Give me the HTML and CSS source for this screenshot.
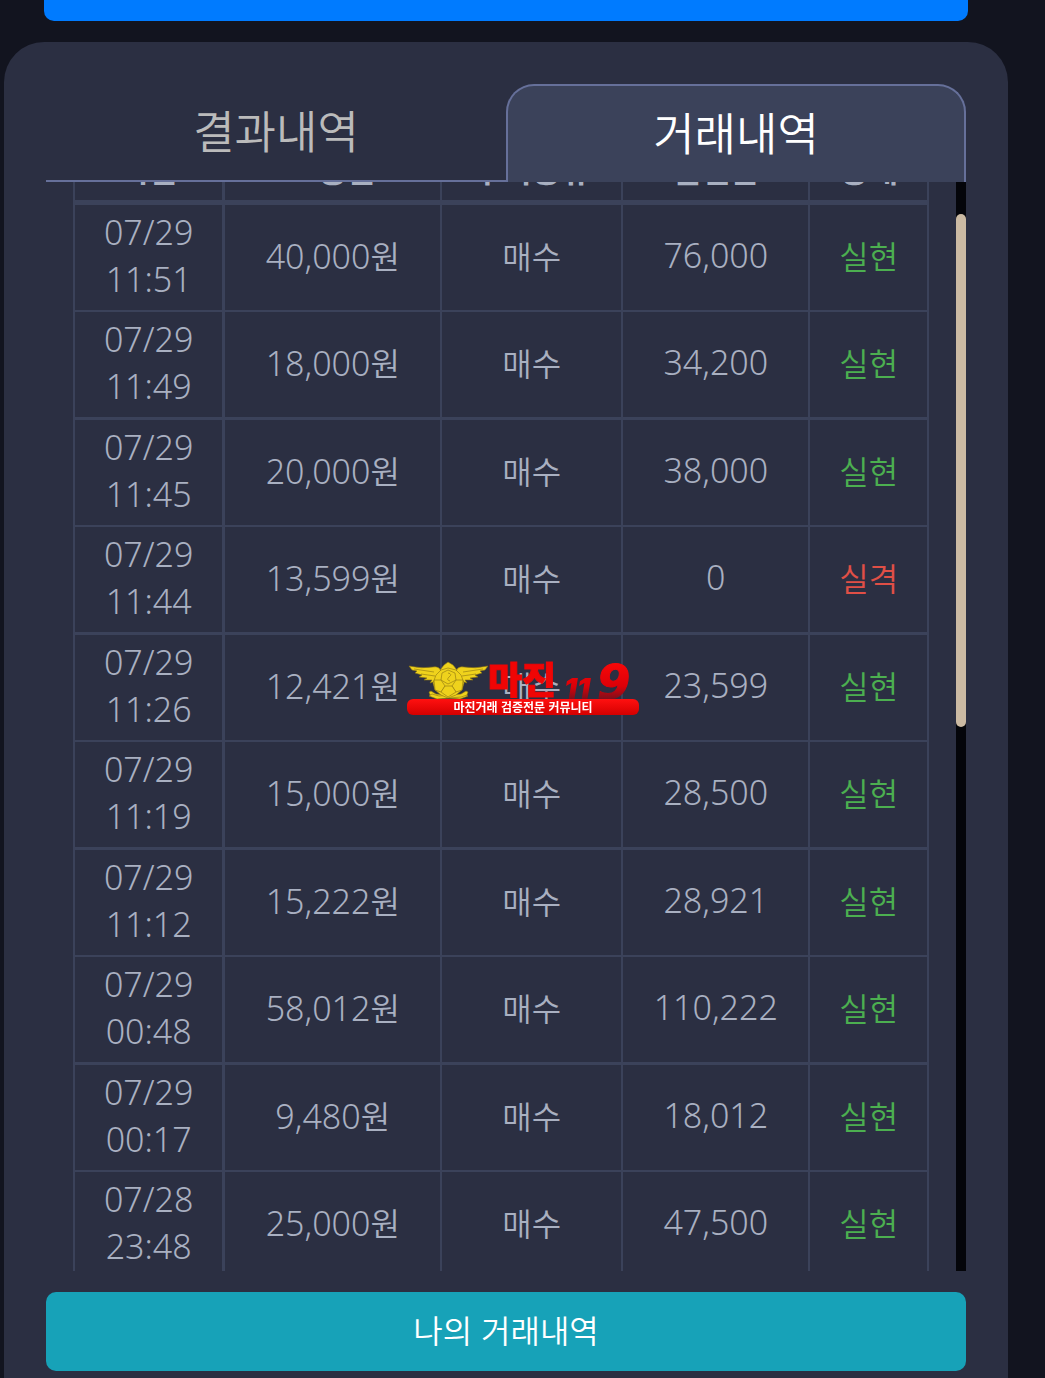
FILE: index.html
```
<!DOCTYPE html>
<html lang="ko">
<head>
    <meta charset="UTF-8">
    <meta name="viewport" content="width=device-width, initial-scale=1.0">
    <title>거래내역</title>
    <link rel="stylesheet" href="styles.css">
</head>
<body>
    <button type="button" class="order" aria-label="주문"></button>
    <main class="panel">
        <nav class="tabs">
            <a href="#result" class="tab">결과내역</a>
            <a href="#trade" class="tab active">거래내역</a>
        </nav>
        <div class="history">
            <div class="list">
                <table>
                    <thead>
                        <tr><th class="time">시간</th><th class="amount">보증금</th><th class="kind">주식종류</th><th class="profit">실현금</th><th>상태</th></tr>
                    </thead>
                    <tbody>
                        <tr><td>07/29<br>11:51</td><td>40,000<span>원</span></td><td><span>매수</span></td><td>76,000</td><td class="win"><span>실현</span></td></tr>
                        <tr><td>07/29<br>11:49</td><td>18,000<span>원</span></td><td><span>매수</span></td><td>34,200</td><td class="win"><span>실현</span></td></tr>
                        <tr><td>07/29<br>11:45</td><td>20,000<span>원</span></td><td><span>매수</span></td><td>38,000</td><td class="win"><span>실현</span></td></tr>
                        <tr><td>07/29<br>11:44</td><td>13,599<span>원</span></td><td><span>매수</span></td><td>0</td><td class="lose"><span>실격</span></td></tr>
                        <tr><td>07/29<br>11:26</td><td>12,421<span>원</span></td><td><span>매수</span></td><td>23,599</td><td class="win"><span>실현</span></td></tr>
                        <tr><td>07/29<br>11:19</td><td>15,000<span>원</span></td><td><span>매수</span></td><td>28,500</td><td class="win"><span>실현</span></td></tr>
                        <tr><td>07/29<br>11:12</td><td>15,222<span>원</span></td><td><span>매수</span></td><td>28,921</td><td class="win"><span>실현</span></td></tr>
                        <tr><td>07/29<br>00:48</td><td>58,012<span>원</span></td><td><span>매수</span></td><td>110,222</td><td class="win"><span>실현</span></td></tr>
                        <tr><td>07/29<br>00:17</td><td>9,480<span>원</span></td><td><span>매수</span></td><td>18,012</td><td class="win"><span>실현</span></td></tr>
                        <tr><td>07/28<br>23:48</td><td>25,000<span>원</span></td><td><span>매수</span></td><td>47,500</td><td class="win"><span>실현</span></td></tr>
                    </tbody>
                </table>
            </div>
            <div class="scrollbar"><div class="thumb"></div></div>
        </div>
        <button type="button" class="mine">나의 거래내역</button>
    </main>

    <svg class="watermark" width="232" height="56" viewBox="0 0 232 56" role="img" aria-label="마진119">
        <defs>
            <linearGradient id="red" x1="0" y1="0" x2="0" y2="1">
                <stop offset="0" stop-color="#ff1010"/>
                <stop offset="1" stop-color="#d40000"/>
            </linearGradient>
            <linearGradient id="fade" x1="0" y1="2" x2="0" y2="38" gradientUnits="userSpaceOnUse">
                <stop offset="0" stop-color="#f80808"/>
                <stop offset=".65" stop-color="#dc0008"/>
                <stop offset="1" stop-color="#7c101c"/>
            </linearGradient>
        </defs>
        <!-- eagle badge -->
        <g fill="#efd21c" stroke="#8c7412" stroke-width=".6" stroke-linejoin="round">
            <path d="M2 5 Q15 8 26 6 Q32 5 34 10 L29 20 L23 22 L25 19 L17 19 L20 17 L12 16 L15 14 L8 12 L10 10 L5 9Z"/>
            <path d="M81 5 Q68 8 57 6 Q51 5 49 10 L54 20 L60 22 L58 19 L66 19 L63 17 L71 16 L68 14 L75 12 L73 10 L78 9Z"/>
            <path d="M37 4 L41 1 L46 4 L50 9 L46 12 L37 12 L33 9Z"/>
            <path d="M22 31 L24 30 L29 33 L51 35 L58 33 L61 35 L53 38 L29 36 L23 34Z"/>
            <path d="M61 31 L59 30 L54 33 L32 35 L25 33 L22 35 L30 38 L54 36 L60 34Z"/>
            <path d="M34 9 L41 7 L49 9 L54 14 L57 22 L55 29 L49 34 L41 37 L34 34 L28 29 L26 22 L29 14Z"/>
            <path d="M35 12 L41 9 L48 12 L49 19 L41 23 L34 19Z"/>
            <path d="M27 19 L34 19 L38 25 L34 31 L28 29Z"/>
            <path d="M56 19 L49 19 L45 25 L49 31 L55 29Z"/>
            <path d="M38 25 L45 25 L49 31 L41 36 L34 31Z"/>
            <path d="M41 12 Q46 13 42 16 Q39 19 43 20" fill="none"/>
            <path d="M7 8 L27 11 M14 13 L28 15 M76 8 L56 11 M69 13 L55 15" fill="none"/>
        </g>
        <text class="brand" x="81" y="33">마진</text>
        <text class="ones" x="157" y="38">11</text>
        <text class="nine" x="190" y="38">9</text>
        <rect y="38" width="232" height="16" rx="6" fill="url(#red)"/>
        <text class="slogan" x="116" y="51">마진거래 검증전문 커뮤니티</text>
    </svg>
</body>
</html>
```
FILE: styles.css
```
* {
    box-sizing: border-box;
}
body {
    display: flex;
    flex-direction: column;
    height: 100vh;
    margin: 0;
    padding: 0 37px 0 4px;
    overflow: hidden;
    background-color: #12141f;
    color: #a9b0c1;
    font-family: "Noto Sans", "Noto Sans CJK KR", sans-serif;
    font-weight: 300;
}
button {
    border: 0;
    font: inherit;
    cursor: pointer;
}
.order {
    flex: none;
    height: 21px;
    margin: 0 40px 21px;
    border-radius: 0 0 10px 10px;
    background-color: #007bff;
}
.panel {
    display: flex;
    flex: 1;
    flex-direction: column;
    min-height: 0;
    padding: 42px 42px 7px;
    border-radius: 40px 40px 0 0;
    background-color: #2b2f42;
}
.tabs {
    display: flex;
    flex: none;
}
.tab {
    width: 50%;
    height: 98px;
    border-bottom: 2px solid #66709a;
    color: #bbb;
    font-family: "Noto Sans CJK KR", sans-serif;
    font-size: 45px;
    font-weight: 350;
    line-height: 92px;
    text-align: center;
    text-decoration: none;
}
.tab.active {
    border: 2px solid #66709a;
    border-bottom: 0;
    border-radius: 28px 28px 0 0;
    background-color: #3b425a;
    color: #fff;
}
.history {
    display: flex;
    flex: 1;
    min-height: 0;
}
.list {
    flex: 1;
    padding: 0 27px;
    overflow: hidden;
}
table {
    width: 100%;
    margin-top: -34px;
    border-left: 2px solid #3b425a;
    border-spacing: 0;
    table-layout: fixed;
    font-size: 34px;
    line-height: 47px;
    text-align: center;
}
th,
td {
    height: 107px;
    padding: 3px 0 7px;
    border-right: 2px solid #3b425a;
    border-bottom: 2px solid #3b425a;
}
th {
    height: 57px;
    padding: 0 0 5px;
    border-bottom-width: 5px;
    font-family: "Noto Sans CJK KR", sans-serif;
    font-size: 32px;
    font-weight: 700;
    line-height: 41px;
    vertical-align: top;
}
th:first-child,
td:first-child {
    border-right-width: 3px;
}
tr:nth-child(even) td {
    height: 108px;
    border-bottom-width: 3px;
}
td span {
    font-family: "Noto Sans CJK KR", sans-serif;
    font-size: 32px;
    font-weight: 350;
}
.time {
    width: 17.6%;
}
.amount {
    width: 25.4%;
}
.kind {
    width: 21.2%;
}
.profit {
    width: 21.9%;
}
.win {
    color: #4caf50;
}
.lose {
    color: #e04f46;
}
.scrollbar {
    width: 10px;
    padding-top: 32px;
    background-color: #04050a;
}
.thumb {
    height: 48.5%;
    border-radius: 5px;
    background-color: #cbbaa3;
}
.mine {
    flex: none;
    height: 79px;
    margin-top: 21px;
    padding-bottom: 6px;
    border-radius: 10px;
    background-color: #17a2b8;
    color: #fff;
    font-family: "Noto Sans CJK KR", sans-serif;
    font-size: 32px;
    font-weight: 350;
}
.watermark {
    position: fixed;
    top: 50%;
    left: 50%;
    transform: translate(-50%, -50%);
    font-family: "Noto Sans CJK KR", sans-serif;
    font-weight: 700;
}
.brand {
    fill: #f00505;
    stroke: #f00505;
    stroke-width: 1;
    font-size: 37px;
    font-weight: 900;
}
.ones,
.nine {
    fill: url(#fade);
    font-family: Inter, sans-serif;
    font-size: 29px;
    font-style: italic;
    font-weight: 900;
}
.nine {
    stroke: url(#fade);
    stroke-width: 1;
    font-family: "DejaVu Sans", sans-serif;
    font-size: 48px;
}
.slogan {
    fill: #fff;
    font-size: 12px;
    text-anchor: middle;
}
```
